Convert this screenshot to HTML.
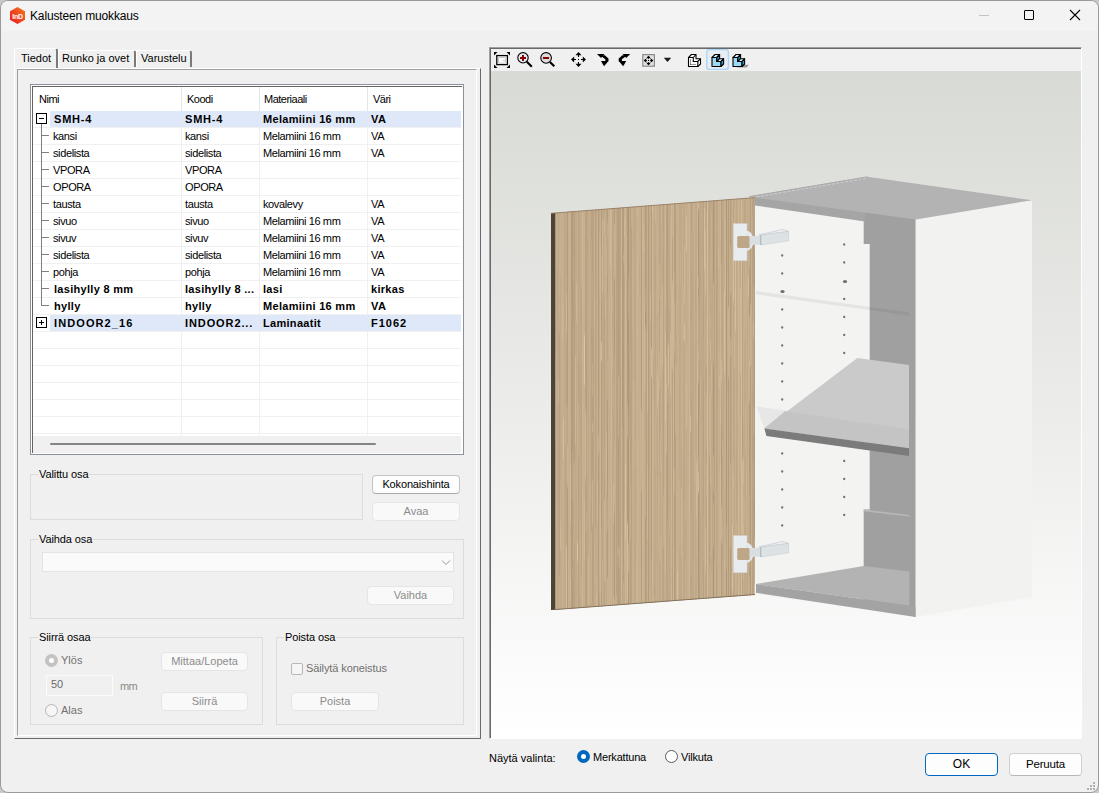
<!DOCTYPE html>
<html><head><meta charset="utf-8">
<style>
*{box-sizing:border-box;margin:0;padding:0}
html,body{width:1099px;height:793px;overflow:hidden;background:#c6c9c4}
body{font-family:"Liberation Sans",sans-serif;font-size:11px;color:#000;position:relative}
.a{position:absolute}
.t{position:absolute;white-space:pre;line-height:13px;height:13px}
.gb{position:absolute;border:1px solid #dcdcdc}
.gbt{position:absolute;white-space:pre;line-height:13px;background:#f0f0f0;padding:0 1px;letter-spacing:-0.1px}
.btn{position:absolute;border:1px solid #c4c4c4;border-bottom-color:#a8a8a8;border-radius:4px;background:#fdfdfd;text-align:center;line-height:17px;letter-spacing:-0.15px}
.btnd{position:absolute;border:1px solid #e5e5e5;border-radius:4px;background:#f9f9f9;text-align:center;line-height:17px;color:#8c8c8c}
.c{position:absolute;white-space:pre;line-height:13px;letter-spacing:-0.38px;color:#000}
.b{font-weight:bold;letter-spacing:0.3px}
</style></head><body>
<div class="a" style="left:0;top:0;width:1099px;height:793px;background:#f0f0f0;border:1px solid #9a9a9a;border-radius:8px"></div>
<div class="a" style="left:1px;top:1px;width:1097px;height:30px;background:#f3f3f3;border-radius:7px 7px 0 0"></div>
<!-- app icon -->
<svg class="a" style="left:8px;top:6px" width="19" height="19" viewBox="0 0 19 19">
 <defs><linearGradient id="ig" x1="0" y1="1" x2="1" y2="0"><stop offset="0" stop-color="#e8161c"/><stop offset="1" stop-color="#f47c22"/></linearGradient></defs>
 <polygon points="9.5,1 17,5.3 17,13.7 9.5,18 2,13.7 2,5.3" fill="url(#ig)"/>
 <text x="9.5" y="12.6" text-anchor="middle" font-family="Liberation Sans" font-weight="bold" font-size="7" fill="#fff" letter-spacing="-0.3">InD</text>
</svg>
<div class="t" style="left:30px;top:9px;font-size:12px;line-height:14px;height:14px;letter-spacing:-0.15px;color:#000">Kalusteen muokkaus</div>
<!-- window controls -->
<div class="a" style="left:979px;top:15px;width:10px;height:1px;background:#c4c4c4"></div>
<div class="a" style="left:1024px;top:10px;width:10px;height:10px;border:1px solid #000;border-radius:1px"></div>
<svg class="a" style="left:1069px;top:9px" width="12" height="12" viewBox="0 0 12 12"><path d="M1 1 L11 11 M11 1 L1 11" stroke="#000" stroke-width="1.1"/></svg>

<!-- tab panel -->
<div class="a" style="left:14px;top:68px;width:467px;height:671px;border-left:1px solid #fff;border-top:1px solid #fff;border-right:1px solid #696969;border-bottom:1px solid #696969"></div>
<div class="a" style="left:17px;top:69px;width:460px;height:667px;border-left:1px solid #a0a0a0;border-top:1px solid #a0a0a0;border-right:1px solid #fff;border-bottom:1px solid #fff"></div>
<!-- tabs -->
<div class="a" style="left:14px;top:48px;width:44px;height:20px;background:#f0f0f0;border-left:1px solid #fff;border-top:1px solid #fff;border-right:2px solid #7a7a7a;border-radius:2px 3px 0 0"></div>
<div class="a" style="left:58px;top:50px;width:78px;height:17px;background:#f0f0f0;border-top:1px solid #fff;border-right:2px solid #7a7a7a;border-left:1px solid #fff;border-radius:0 3px 0 0"></div>
<div class="a" style="left:136px;top:50px;width:56px;height:17px;background:#f0f0f0;border-top:1px solid #fff;border-right:2px solid #7a7a7a;border-left:1px solid #fff;border-radius:0 3px 0 0"></div>
<div class="t" style="left:21px;top:52px">Tiedot</div>
<div class="t" style="left:62px;top:52px">Runko ja ovet</div>
<div class="t" style="left:141px;top:52px">Varustelu</div>

<!-- listview -->
<div class="a" style="left:30px;top:84px;width:434px;height:371px;border:1px solid #8a919b"></div>
<div class="a" style="left:31px;top:85px;width:432px;height:369px;border:1px solid #fff"></div>
<div class="a" style="left:32px;top:86px;width:430px;height:367px;background:#fff;border-left:1px solid #646464;border-top:1px solid #646464"></div>
<div class="a" style="left:181px;top:87px;width:1px;height:24px;background:#e5e5e5"></div>
<div class="a" style="left:259px;top:87px;width:1px;height:24px;background:#e5e5e5"></div>
<div class="a" style="left:367px;top:87px;width:1px;height:24px;background:#e5e5e5"></div>
<div class="a" style="left:181px;top:111px;width:1px;height:325px;background:#f0f0f0"></div>
<div class="a" style="left:259px;top:111px;width:1px;height:325px;background:#f0f0f0"></div>
<div class="a" style="left:367px;top:111px;width:1px;height:325px;background:#f0f0f0"></div>
<div class="c" style="left:39px;top:93px;letter-spacing:-0.5px">Nimi</div>
<div class="c" style="left:187px;top:93px;letter-spacing:-0.5px">Koodi</div>
<div class="c" style="left:264px;top:93px;letter-spacing:-0.5px">Materiaali</div>
<div class="c" style="left:373px;top:93px;letter-spacing:-0.5px">Väri</div>
<div class="a" style="left:33px;top:127px;width:428px;height:1px;background:#f0f0f0"></div>
<div class="a" style="left:33px;top:144px;width:428px;height:1px;background:#f0f0f0"></div>
<div class="a" style="left:33px;top:161px;width:428px;height:1px;background:#f0f0f0"></div>
<div class="a" style="left:33px;top:178px;width:428px;height:1px;background:#f0f0f0"></div>
<div class="a" style="left:33px;top:195px;width:428px;height:1px;background:#f0f0f0"></div>
<div class="a" style="left:33px;top:212px;width:428px;height:1px;background:#f0f0f0"></div>
<div class="a" style="left:33px;top:229px;width:428px;height:1px;background:#f0f0f0"></div>
<div class="a" style="left:33px;top:246px;width:428px;height:1px;background:#f0f0f0"></div>
<div class="a" style="left:33px;top:263px;width:428px;height:1px;background:#f0f0f0"></div>
<div class="a" style="left:33px;top:280px;width:428px;height:1px;background:#f0f0f0"></div>
<div class="a" style="left:33px;top:297px;width:428px;height:1px;background:#f0f0f0"></div>
<div class="a" style="left:33px;top:314px;width:428px;height:1px;background:#f0f0f0"></div>
<div class="a" style="left:33px;top:331px;width:428px;height:1px;background:#f0f0f0"></div>
<div class="a" style="left:33px;top:348px;width:428px;height:1px;background:#f0f0f0"></div>
<div class="a" style="left:33px;top:365px;width:428px;height:1px;background:#f0f0f0"></div>
<div class="a" style="left:33px;top:382px;width:428px;height:1px;background:#f0f0f0"></div>
<div class="a" style="left:33px;top:399px;width:428px;height:1px;background:#f0f0f0"></div>
<div class="a" style="left:33px;top:416px;width:428px;height:1px;background:#f0f0f0"></div>
<div class="a" style="left:33px;top:433px;width:428px;height:1px;background:#f0f0f0"></div>
<div class="a" style="left:50px;top:111px;width:411px;height:16px;background:#dfe8f9"></div>
<div class="a" style="left:36px;top:113px;width:11px;height:11px;border:1px solid #000;background:#fff"></div>
<div class="a" style="left:39px;top:118px;width:5px;height:1px;background:#000"></div>
<div class="a" style="left:41px;top:124px;width:1px;height:4px;background:#808080"></div>
<div class="c b" style="left:54px;top:113px;letter-spacing:0.8px">SMH-4</div>
<div class="c b" style="left:185px;top:113px;letter-spacing:0.8px">SMH-4</div>
<div class="c b" style="left:263px;top:113px">Melamiini 16 mm</div>
<div class="c b" style="left:371px;top:113px;letter-spacing:0.5px">VA</div>
<div class="a" style="left:41px;top:128px;width:1px;height:17px;background:#808080"></div>
<div class="a" style="left:41px;top:135px;width:8px;height:1px;background:#808080"></div>
<div class="c" style="left:53px;top:130px">kansi</div>
<div class="c" style="left:185px;top:130px">kansi</div>
<div class="c" style="left:263px;top:130px">Melamiini 16 mm</div>
<div class="c" style="left:371px;top:130px">VA</div>
<div class="a" style="left:41px;top:145px;width:1px;height:17px;background:#808080"></div>
<div class="a" style="left:41px;top:152px;width:8px;height:1px;background:#808080"></div>
<div class="c" style="left:53px;top:147px">sidelista</div>
<div class="c" style="left:185px;top:147px">sidelista</div>
<div class="c" style="left:263px;top:147px">Melamiini 16 mm</div>
<div class="c" style="left:371px;top:147px">VA</div>
<div class="a" style="left:41px;top:162px;width:1px;height:17px;background:#808080"></div>
<div class="a" style="left:41px;top:169px;width:8px;height:1px;background:#808080"></div>
<div class="c" style="left:53px;top:164px">VPORA</div>
<div class="c" style="left:185px;top:164px">VPORA</div>
<div class="a" style="left:41px;top:179px;width:1px;height:17px;background:#808080"></div>
<div class="a" style="left:41px;top:186px;width:8px;height:1px;background:#808080"></div>
<div class="c" style="left:53px;top:181px">OPORA</div>
<div class="c" style="left:185px;top:181px">OPORA</div>
<div class="a" style="left:41px;top:196px;width:1px;height:17px;background:#808080"></div>
<div class="a" style="left:41px;top:203px;width:8px;height:1px;background:#808080"></div>
<div class="c" style="left:53px;top:198px">tausta</div>
<div class="c" style="left:185px;top:198px">tausta</div>
<div class="c" style="left:263px;top:198px">kovalevy</div>
<div class="c" style="left:371px;top:198px">VA</div>
<div class="a" style="left:41px;top:213px;width:1px;height:17px;background:#808080"></div>
<div class="a" style="left:41px;top:220px;width:8px;height:1px;background:#808080"></div>
<div class="c" style="left:53px;top:215px">sivuo</div>
<div class="c" style="left:185px;top:215px">sivuo</div>
<div class="c" style="left:263px;top:215px">Melamiini 16 mm</div>
<div class="c" style="left:371px;top:215px">VA</div>
<div class="a" style="left:41px;top:230px;width:1px;height:17px;background:#808080"></div>
<div class="a" style="left:41px;top:237px;width:8px;height:1px;background:#808080"></div>
<div class="c" style="left:53px;top:232px">sivuv</div>
<div class="c" style="left:185px;top:232px">sivuv</div>
<div class="c" style="left:263px;top:232px">Melamiini 16 mm</div>
<div class="c" style="left:371px;top:232px">VA</div>
<div class="a" style="left:41px;top:247px;width:1px;height:17px;background:#808080"></div>
<div class="a" style="left:41px;top:254px;width:8px;height:1px;background:#808080"></div>
<div class="c" style="left:53px;top:249px">sidelista</div>
<div class="c" style="left:185px;top:249px">sidelista</div>
<div class="c" style="left:263px;top:249px">Melamiini 16 mm</div>
<div class="c" style="left:371px;top:249px">VA</div>
<div class="a" style="left:41px;top:264px;width:1px;height:17px;background:#808080"></div>
<div class="a" style="left:41px;top:271px;width:8px;height:1px;background:#808080"></div>
<div class="c" style="left:53px;top:266px">pohja</div>
<div class="c" style="left:185px;top:266px">pohja</div>
<div class="c" style="left:263px;top:266px">Melamiini 16 mm</div>
<div class="c" style="left:371px;top:266px">VA</div>
<div class="a" style="left:41px;top:281px;width:1px;height:17px;background:#808080"></div>
<div class="a" style="left:41px;top:288px;width:8px;height:1px;background:#808080"></div>
<div class="c b" style="left:54px;top:283px">lasihylly 8 mm</div>
<div class="c b" style="left:185px;top:283px">lasihylly 8 ...</div>
<div class="c b" style="left:263px;top:283px">lasi</div>
<div class="c b" style="left:371px;top:283px">kirkas</div>
<div class="a" style="left:41px;top:298px;width:1px;height:8px;background:#808080"></div>
<div class="a" style="left:41px;top:305px;width:8px;height:1px;background:#808080"></div>
<div class="c b" style="left:54px;top:300px">hylly</div>
<div class="c b" style="left:185px;top:300px">hylly</div>
<div class="c b" style="left:263px;top:300px">Melamiini 16 mm</div>
<div class="c b" style="left:371px;top:300px;letter-spacing:0.5px">VA</div>
<div class="a" style="left:50px;top:315px;width:411px;height:16px;background:#dfe8f9"></div>
<div class="a" style="left:36px;top:317px;width:11px;height:11px;border:1px solid #000;background:#fff"></div>
<div class="a" style="left:39px;top:322px;width:5px;height:1px;background:#000"></div>
<div class="a" style="left:41px;top:320px;width:1px;height:5px;background:#000"></div>
<div class="c b" style="left:54px;top:317px;letter-spacing:1.1px">INDOOR2_16</div>
<div class="c b" style="left:185px;top:317px;letter-spacing:0.9px">INDOOR2...</div>
<div class="c b" style="left:263px;top:317px">Laminaatit</div>
<div class="c b" style="left:371px;top:317px;letter-spacing:1.0px">F1062</div>
<!-- scrollbar -->
<div class="a" style="left:33px;top:436px;width:428px;height:17px;background:#f0f0f0"></div>
<div class="a" style="left:50px;top:443px;width:326px;height:2px;background:#858585;border-radius:1px"></div>

<!-- Valittu osa -->
<div class="gb" style="left:30px;top:474px;width:333px;height:46px"></div>
<div class="gbt" style="left:38px;top:468px">Valittu osa</div>
<div class="btn" style="left:372px;top:475px;width:88px;height:19px">Kokonaishinta</div>
<div class="btnd" style="left:372px;top:502px;width:88px;height:19px">Avaa</div>

<!-- Vaihda osa -->
<div class="gb" style="left:30px;top:539px;width:434px;height:80px"></div>
<div class="gbt" style="left:38px;top:533px">Vaihda osa</div>
<div class="a" style="left:42px;top:552px;width:412px;height:20px;background:#fafafa;border:1px solid #e4e4e4"></div>
<svg class="a" style="left:441px;top:559px" width="10" height="7" viewBox="0 0 10 7"><path d="M1 1.5 L5 5.5 L9 1.5" stroke="#9a9a9a" fill="none" stroke-width="1"/></svg>
<div class="btnd" style="left:367px;top:586px;width:87px;height:19px">Vaihda</div>

<!-- Siirrä osaa -->
<div class="gb" style="left:30px;top:637px;width:233px;height:88px"></div>
<div class="gbt" style="left:38px;top:631px">Siirrä osaa</div>
<div class="a" style="left:45px;top:654px;width:13px;height:13px;border-radius:50%;background:#c3c3c3"></div>
<div class="a" style="left:49px;top:658px;width:5px;height:5px;border-radius:50%;background:#fff"></div>
<div class="t" style="left:61px;top:654px;color:#707070">Ylös</div>
<div class="a" style="left:46px;top:675px;width:67px;height:21px;border:1px solid #fbfbfb;background:#f0f0f0"></div>
<div class="t" style="left:51px;top:678px;color:#6a6a6a">50</div>
<div class="t" style="left:120px;top:680px;color:#8a8a8a;letter-spacing:-0.6px">mm</div>
<div class="a" style="left:45px;top:704px;width:13px;height:13px;border-radius:50%;background:#f6f6f6;border:1px solid #b5b5b5"></div>
<div class="t" style="left:61px;top:704px;color:#707070">Alas</div>
<div class="btnd" style="left:161px;top:652px;width:87px;height:19px">Mittaa/Lopeta</div>
<div class="btnd" style="left:161px;top:692px;width:87px;height:19px">Siirrä</div>

<!-- Poista osa -->
<div class="gb" style="left:276px;top:637px;width:188px;height:88px"></div>
<div class="gbt" style="left:284px;top:631px">Poista osa</div>
<div class="a" style="left:291px;top:663px;width:12px;height:12px;border-radius:2px;background:#f6f6f6;border:1px solid #b8b8b8"></div>
<div class="t" style="left:306px;top:662px;color:#707070;letter-spacing:-0.1px">Säilytä koneistus</div>
<div class="btnd" style="left:291px;top:692px;width:88px;height:19px">Poista</div>

<!-- 3D view frame -->
<div class="a" style="left:489px;top:47px;width:593px;height:692px;border-left:1px solid #a0a0a0;border-top:1px solid #a0a0a0;border-right:1px solid #fff;border-bottom:1px solid #fff"></div>
<div class="a" style="left:490px;top:48px;width:591px;height:690px;border-left:1px solid #696969;border-top:1px solid #696969;background:linear-gradient(#d9dbd6 0px,#d9dbd6 23px,#e6e7e3 200px,#f3f3f2 480px,#fbfbfb 690px)"></div>
<div class="a" style="left:491px;top:49px;width:590px;height:22px;background:#f0f0f0"></div>
<!-- toolbar icons -->
<svg class="a" style="left:491px;top:49px" width="270" height="22" viewBox="491 49 270 22">
 <!-- zoom extents -->
 <g fill="#000">
  <polygon points="494,52 497.5,52 494,55.5"/><polygon points="510,52 506.5,52 510,55.5"/>
  <polygon points="494,68 497.5,68 494,64.5"/><polygon points="510,68 506.5,68 510,64.5"/>
 </g>
 <rect x="496.8" y="55.6" width="10.6" height="9" fill="#fff" stroke="#000" stroke-width="1.3"/>
 <path d="M498.5 57.5 H505.7 V63 H498.5 Z M502.5 60.5 H505.7" stroke="#c4c4c4" stroke-width="0.9" fill="none"/>
 <!-- zoom in -->
 <circle cx="523" cy="57.8" r="5.2" fill="#e4eeee" stroke="#000" stroke-width="1.1"/>
 <path d="M526.8 61.8 L531.8 66.8" stroke="#000" stroke-width="2.1"/>
 <path d="M520 58.1 H526 M523 55 V61" stroke="#8b0000" stroke-width="2"/>
 <!-- zoom out -->
 <circle cx="546.1" cy="57.9" r="5.3" fill="#dcdcdc" stroke="#000" stroke-width="1.1"/>
 <path d="M549.9 61.9 L554.3 66.3" stroke="#000" stroke-width="2.1"/>
 <path d="M543 58 H549" stroke="#8b0000" stroke-width="2"/>
 <!-- pan -->
 <g fill="#000">
  <polygon points="578.5,52 581.5,55.2 575.5,55.2"/><polygon points="578.5,67 581.5,63.8 575.5,63.8"/>
  <polygon points="571,59.5 574.2,56.5 574.2,62.5"/><polygon points="586,59.5 582.8,56.5 582.8,62.5"/>
  <rect x="578" y="55" width="1" height="2"/><rect x="578" y="62" width="1" height="2"/>
  <rect x="574" y="59" width="2" height="1"/><rect x="581" y="59" width="2" height="1"/>
  <rect x="578" y="59" width="1" height="1"/>
 </g>
 <!-- rotate left -->
 <g fill="#000">
  <polygon points="597,54 604.5,54 601,58"/>
  <polygon points="602,55.3 604.8,55.3 608.5,58.5 608.5,61.2 605.3,61.2 605.3,59.3 602,56.8"/>
  <polygon points="601,61 608.5,61 604,66.2"/>
 </g>
 <!-- rotate right -->
 <g fill="#000" transform="translate(1227.2,0) scale(-1,1)">
  <polygon points="597,54 604.5,54 601,58"/>
  <polygon points="602,55.3 604.8,55.3 608.5,58.5 608.5,61.2 605.3,61.2 605.3,59.3 602,56.8"/>
  <polygon points="601,61 608.5,61 604,66.2"/>
 </g>
 <!-- snap -->
 <rect x="642.8" y="54.6" width="11.6" height="11.6" fill="#e0e0e0" stroke="#8a8a8a" stroke-width="1.2"/>
 <path d="M648.5 56.5 L652.5 60.5 L648.5 64.5 L644.5 60.5 Z" fill="none" stroke="#000" stroke-width="0.9" stroke-dasharray="1 0.8"/>
 <g fill="#000">
  <polygon points="648.5,55.8 650.3,57.6 648.5,59 646.7,57.6"/><polygon points="648.5,65.2 650.3,63.4 648.5,62 646.7,63.4"/>
  <polygon points="643.8,60.5 645.6,58.7 647,60.5 645.6,62.3"/><polygon points="653.2,60.5 651.4,58.7 650,60.5 651.4,62.3"/>
  <rect x="648" y="60" width="1" height="1"/>
 </g>
 <polygon points="663.8,57.8 671.2,57.8 667.5,62" fill="#1a1a1a"/>
 <!-- wire cube -->
 <g stroke="#000" stroke-width="1.1" fill="#fff" stroke-linejoin="round">
  <polygon points="688.5,57.5 691.5,54.5 696,54.5 696,58.7 700.5,58.7 700.5,64 697.8,66.5 688.5,66.5"/>
  <path d="M688.5 57.5 H693.3 V61.5 H697.8 V66.5 M693.3 57.5 L696 54.5 M697.8 61.5 L700.5 58.7" fill="none"/>
 </g>
 <path d="M690.5 64.5 H696 M690.5 59.5 V64.5" stroke="#000" stroke-width="0.8" stroke-dasharray="1 1" fill="none"/>
 <!-- selected shaded cube -->
 <rect x="706.8" y="49.6" width="21.6" height="19.8" rx="2.5" fill="#e9eef3" stroke="#a9d6fb" stroke-width="1.4"/>
 <g stroke="#000" stroke-width="1.1" stroke-linejoin="round">
  <polygon points="712,57.5 716.8,57.5 716.8,61.5 721,61.5 721,66.5 712,66.5" fill="#9fd8f2"/>
  <polygon points="712,57.5 715,54.5 719.6,54.5 716.8,57.5" fill="#dff3fb"/>
  <polygon points="716.8,57.5 719.6,54.5 719.6,58.7 716.8,61.5" fill="#2b9fd1"/>
  <polygon points="716.8,61.5 719.6,58.7 723.6,58.7 721,61.5" fill="#dff3fb"/>
  <polygon points="721,61.5 723.6,58.7 723.6,64 721,66.5" fill="#2b9fd1"/>
 </g>
 <!-- shaded cube w shadow -->
 <polygon points="737,67.5 746.5,67.5 749,64.8 740,64.8" fill="#9a9a9a"/>
 <g stroke="#000" stroke-width="1.1" stroke-linejoin="round">
  <polygon points="733,57.5 737.8,57.5 737.8,61.5 742,61.5 742,66.5 733,66.5" fill="#9fd8f2"/>
  <polygon points="733,57.5 736,54.5 740.6,54.5 737.8,57.5" fill="#dff3fb"/>
  <polygon points="737.8,57.5 740.6,54.5 740.6,58.7 737.8,61.5" fill="#2b9fd1"/>
  <polygon points="737.8,61.5 740.6,58.7 744.6,58.7 742,61.5" fill="#dff3fb"/>
  <polygon points="742,61.5 744.6,58.7 744.6,64 742,66.5" fill="#2b9fd1"/>
 </g>
</svg>
<!-- 3D scene -->
<svg class="a" style="left:491px;top:71px" width="590" height="667" viewBox="491 71 590 667">
 <defs>
  <linearGradient id="bg" x1="0" y1="71" x2="0" y2="738" gradientUnits="userSpaceOnUse"><stop offset="0" stop-color="#d8dad5"/><stop offset="1" stop-color="#ffffff"/></linearGradient>
  <filter id="wblur" x="0" y="0" width="1" height="1"><feGaussianBlur stdDeviation="0.6 1.5"/></filter>
  <clipPath id="doorclip"><polygon points="555,212.7 755,197.6 755,594.7 555,609.7"/></clipPath>
 </defs>
 <rect x="491" y="71" width="590" height="667" fill="url(#bg)"/>
 <!-- cabinet top -->
 <!-- right exterior side -->
 <polygon points="915.5,219.6 1032,200.2 1032,597 915.5,617" fill="#f2f2f1"/>
 <!-- interior back -->
 <polygon points="755,197 915.5,219.6 915.5,616 755,594" fill="#f3f3f2"/>
 <!-- interior right side column -->
 <polygon points="863.7,209 915.5,216.6 915.5,617 863.7,600 863.7,509.6 869.7,509.6 869.7,244 863.7,244" fill="#a0a0a0"/>
 <!-- under top band -->
 <polygon points="755,195 865,210.2 865,221.6 755,205.5" fill="#a5a5a5"/>
 <!-- top surface -->
 <polygon points="748.5,196.6 867.3,176.7 1032,200.2 915.5,219.6" fill="#b3b3b3"/>
 <path d="M749 196.7 L867.3 176.9" stroke="#a9a9a9" stroke-width="1"/>
 <path d="M752 197.5 L866 178.4" stroke="#e2e2e2" stroke-width="0.7" stroke-dasharray="3 1.5" opacity="0.8"/>
 <!-- lower step highlight -->
 <polygon points="863.7,509.6 909.3,515 909.3,516.5 863.7,511.2" fill="#b8b8b8"/>
 <!-- glass shelf line -->
 <polygon points="756,291 869.7,307 869.7,310 756,294.5" fill="#e4e4e4"/>
 <polygon points="869.7,307 909.3,312.6 909.3,315.8 869.7,310" fill="#979797"/>
 <!-- faint glass shelf reflection -->
 <polygon points="756.6,406.4 790,411 764.4,428.5" fill="#e7e7e7"/>
 <!-- shelf -->
 <polygon points="857.4,358 909,364.9 909,448.2 764.4,428.5" fill="#cacaca"/>
 <polygon points="785,411.3 909,429.3 909,448.2 764.4,428.5" fill="#c4c4c4"/>
 <polygon points="764.4,428.5 909,448.2 909,456 766.4,435.9" fill="#7b7b7b"/>
 <!-- bottom panel -->
 <polygon points="863.7,566.1 909.3,571.6 909.3,605.7 756,584.1" fill="#b3b3b3"/>
 <polygon points="756,584.1 909.3,605.7 915.5,606.5 915.5,617 756,592.8" fill="#a3a3a3"/>
 <!-- door -->
 <polygon points="551,213.3 755,197.6 755,594.7 551,610.1" fill="#bea786"/>
 <g clip-path="url(#doorclip)"><g filter="url(#wblur)">
<rect x="551" y="190" width="206" height="430" fill="#bea786"/>
<path d="M653.5 356v47M685.5 522v40M654.5 582v71M665.5 307v61M645.5 312v51" stroke="rgb(155,133,106)" stroke-width="1" fill="none" opacity="0.7"/>
<path d="M628.5 195v420M698.5 195v420M713.5 195v420M726.5 195v420M646.5 440v82M730.5 591v29M575.5 307v11M710.5 309v19M632.5 332v89M644.5 308v25M600.5 209v36M584.5 360v25M607.5 230v16M627.5 278v68M655.5 256v31M717.5 276v89M682.5 543v51M686.5 350v75M644.5 201v40M605.5 211v24M612.5 303v25M632.5 372v77M555.5 517v56M722.5 598v25M675.5 228v74M719.5 314v35M697.5 532v57M633.5 209v39" stroke="rgb(164,142,114)" stroke-width="1" fill="none" opacity="0.7"/>
<path d="M567.5 195v420M571.5 195v420M572.5 195v420M598.5 195v420M601.5 195v420M607.5 195v420M614.5 195v420M618.5 195v420M622.5 195v420M623.5 195v420M627.5 195v420M641.5 195v420M645.5 195v420M648.5 195v420M651.5 195v420M667.5 195v420M674.5 195v420M721.5 195v420M728.5 195v420M730.5 195v420M749.5 195v420M750.5 195v420M754.5 195v420M684.5 416v85M666.5 332v51M610.5 519v50M656.5 410v65M598.5 595v41M626.5 195v39M717.5 254v51M746.5 566v75M743.5 426v67M612.5 216v84M573.5 295v29M749.5 299v17M655.5 281v88M592.5 289v42M676.5 333v34M753.5 238v47M595.5 197v82M587.5 201v53M572.5 456v38M588.5 525v17M693.5 474v88M576.5 281v17M561.5 551v75M681.5 316v16M731.5 293v46M588.5 379v71M725.5 480v61M603.5 322v47M594.5 486v52M566.5 391v20M629.5 371v87M727.5 349v47M736.5 452v59M751.5 395v42M700.5 230v60M566.5 349v55M683.5 459v42M621.5 449v88M721.5 447v33M669.5 310v78M705.5 586v27M734.5 567v51M591.5 230v12M722.5 215v72M582.5 383v16M583.5 561v30M564.5 247v48M565.5 412v87M664.5 548v58M622.5 343v63M719.5 412v69M737.5 248v79M654.5 381v23M632.5 345v57M629.5 363v54M679.5 613v36M639.5 261v32M733.5 440v87M586.5 343v67M563.5 212v21M669.5 496v29M607.5 424v87M736.5 592v49M579.5 352v68M744.5 201v36M682.5 342v53M636.5 220v36M743.5 250v9M727.5 220v54M733.5 559v12M754.5 487v45M733.5 380v48M578.5 288v14M566.5 481v66M613.5 284v77M742.5 416v32M561.5 446v87M733.5 201v85M571.5 438v27M750.5 614v73M573.5 496v37M743.5 542v41M555.5 269v85M665.5 557v50M690.5 576v49M684.5 533v63M689.5 511v31M637.5 534v17M734.5 573v69M561.5 522v10M671.5 363v50M569.5 396v19M695.5 278v30" stroke="rgb(173,151,122)" stroke-width="1" fill="none" opacity="0.7"/>
<path d="M559.5 195v420M573.5 195v420M574.5 195v420M578.5 195v420M581.5 195v420M585.5 195v420M586.5 195v420M591.5 195v420M592.5 195v420M593.5 195v420M595.5 195v420M604.5 195v420M616.5 195v420M617.5 195v420M619.5 195v420M620.5 195v420M630.5 195v420M631.5 195v420M646.5 195v420M659.5 195v420M663.5 195v420M666.5 195v420M672.5 195v420M675.5 195v420M691.5 195v420M699.5 195v420M703.5 195v420M706.5 195v420M709.5 195v420M714.5 195v420M716.5 195v420M742.5 195v420M752.5 195v420M753.5 195v420M650.5 270v73M720.5 607v62M576.5 430v28M737.5 381v58M722.5 253v18M618.5 498v10M654.5 546v40M656.5 484v89M660.5 510v62M722.5 430v59M652.5 196v73M613.5 412v46M735.5 317v39M633.5 614v56M580.5 393v36M599.5 576v90M704.5 368v42M684.5 516v46M689.5 371v29M579.5 600v25M743.5 205v27M650.5 597v86M668.5 352v69M606.5 522v86M573.5 264v65M651.5 217v84M712.5 288v41M578.5 447v53M639.5 440v43M710.5 387v23M734.5 310v75M591.5 263v85M671.5 566v17M753.5 437v38M616.5 321v12M724.5 494v30M602.5 576v60M574.5 513v25M637.5 378v71M576.5 462v15M712.5 488v73M635.5 361v81M620.5 260v77M593.5 322v66M561.5 363v73M681.5 390v20M669.5 510v43M605.5 373v45M690.5 586v23M638.5 372v65M660.5 287v74M718.5 392v32M608.5 353v29M583.5 544v60M557.5 200v86M575.5 255v27M588.5 569v58M703.5 379v80M723.5 392v54M655.5 309v50M749.5 470v73M564.5 321v9M592.5 582v58M688.5 387v71M592.5 216v71M685.5 538v15M613.5 220v88M648.5 282v29M695.5 347v54M674.5 340v51M668.5 305v72M646.5 593v83M746.5 476v40M740.5 549v60M588.5 401v34M750.5 202v74M592.5 378v83M699.5 218v74M608.5 273v76M558.5 447v55M655.5 312v18M603.5 336v44M741.5 300v43M661.5 224v44M731.5 567v11M690.5 310v52M739.5 456v29M595.5 493v46M666.5 401v31M729.5 450v39M658.5 412v64M747.5 399v44M719.5 611v81M688.5 278v49M669.5 368v18M698.5 344v22M608.5 237v82M644.5 357v12M675.5 598v49M616.5 563v48M713.5 297v22M643.5 546v74M734.5 442v38M709.5 357v62M724.5 343v60M564.5 298v17M693.5 360v69M580.5 515v12M707.5 266v63M708.5 544v17M577.5 331v46M680.5 588v62M591.5 542v34M748.5 233v11M624.5 277v15M669.5 595v47M623.5 567v10M727.5 301v16M753.5 498v16M738.5 561v22M704.5 338v71M583.5 563v52M729.5 452v14M609.5 405v29M709.5 461v60M634.5 279v57M597.5 332v69M690.5 337v13M637.5 214v59M717.5 373v52M672.5 428v62M703.5 303v66M562.5 407v27M702.5 405v17M634.5 329v42M749.5 358v40M740.5 302v58M684.5 426v34M673.5 613v27M660.5 452v64M645.5 232v40M628.5 414v27M619.5 297v76M636.5 467v74M660.5 404v82M706.5 206v57M651.5 218v65M606.5 556v54M738.5 429v12M617.5 419v42M667.5 531v49M566.5 487v11M722.5 318v27M667.5 260v83M574.5 427v73M561.5 411v16M684.5 250v55M584.5 234v80M697.5 221v28M674.5 608v11M717.5 339v74M720.5 589v82M703.5 545v74M720.5 524v79M722.5 292v24M572.5 469v77M675.5 387v36M597.5 344v77M572.5 309v65M679.5 382v87M704.5 210v35M663.5 372v88M582.5 412v80M625.5 590v30M616.5 466v87M709.5 361v85M592.5 561v52M725.5 475v55M720.5 241v26M621.5 434v26M655.5 373v13M749.5 509v86M575.5 240v21M650.5 540v19" stroke="rgb(182,160,130)" stroke-width="1" fill="none" opacity="0.7"/>
<path d="M555.5 195v420M557.5 195v420M558.5 195v420M560.5 195v420M564.5 195v420M565.5 195v420M566.5 195v420M575.5 195v420M576.5 195v420M579.5 195v420M580.5 195v420M587.5 195v420M588.5 195v420M590.5 195v420M596.5 195v420M599.5 195v420M602.5 195v420M603.5 195v420M606.5 195v420M612.5 195v420M613.5 195v420M624.5 195v420M629.5 195v420M634.5 195v420M635.5 195v420M649.5 195v420M654.5 195v420M655.5 195v420M657.5 195v420M660.5 195v420M662.5 195v420M668.5 195v420M669.5 195v420M670.5 195v420M679.5 195v420M680.5 195v420M681.5 195v420M683.5 195v420M684.5 195v420M686.5 195v420M690.5 195v420M692.5 195v420M693.5 195v420M695.5 195v420M696.5 195v420M700.5 195v420M701.5 195v420M702.5 195v420M705.5 195v420M708.5 195v420M710.5 195v420M711.5 195v420M712.5 195v420M717.5 195v420M722.5 195v420M723.5 195v420M731.5 195v420M733.5 195v420M734.5 195v420M736.5 195v420M737.5 195v420M740.5 195v420M744.5 195v420M745.5 195v420M747.5 195v420M613.5 296v56M589.5 394v67M650.5 590v65M558.5 334v59M738.5 435v65M692.5 374v14M622.5 427v84M587.5 216v25M590.5 341v9M701.5 426v24M723.5 561v63M603.5 601v33M595.5 407v8M607.5 233v41M615.5 293v56M715.5 542v56M733.5 482v65M581.5 346v17M704.5 406v52M702.5 301v14M608.5 501v25M691.5 517v59M584.5 302v69M689.5 486v63M733.5 279v88M656.5 567v66M721.5 315v85M564.5 503v45M615.5 429v40M593.5 233v36M748.5 248v49M680.5 557v26M734.5 394v56M665.5 212v72M605.5 462v65M659.5 440v40M599.5 447v9M616.5 204v49M617.5 539v27M734.5 566v68M630.5 352v35M610.5 343v86M649.5 352v83M717.5 517v11M739.5 303v69M607.5 496v34M654.5 493v45M578.5 275v88M576.5 445v59M690.5 273v34M634.5 426v60M576.5 401v74M632.5 575v59M724.5 543v23M706.5 211v77M652.5 294v71M580.5 376v16M643.5 409v11M701.5 522v50M726.5 613v68M738.5 264v73M741.5 223v37M583.5 406v83M753.5 460v40M707.5 381v22M718.5 302v60M751.5 441v62M561.5 258v59M625.5 240v37M649.5 252v85M667.5 342v61M643.5 589v68M743.5 255v24M676.5 408v61M704.5 390v69M645.5 290v17M622.5 510v65M712.5 415v30M683.5 600v26M607.5 294v69M694.5 555v44M699.5 435v33M560.5 240v84M725.5 455v11M707.5 606v8M743.5 314v26M572.5 568v10M705.5 466v37M723.5 260v21M600.5 498v80M562.5 423v21M707.5 246v89M609.5 363v9M721.5 344v78M555.5 498v31M601.5 254v48M662.5 557v9M691.5 586v35M751.5 409v48M698.5 458v36M597.5 378v43M680.5 487v57M575.5 271v11M712.5 431v29M717.5 437v83M575.5 466v25M555.5 482v18M748.5 232v79M698.5 297v68M696.5 388v84M639.5 441v75M716.5 483v83M665.5 530v24M592.5 276v23M629.5 240v60M748.5 612v26M705.5 590v64M588.5 295v20M698.5 277v11M719.5 396v60M583.5 288v13M612.5 571v13M572.5 451v49M671.5 280v13M622.5 549v79M737.5 395v80M591.5 238v29M718.5 208v16M673.5 557v20M660.5 361v85M742.5 461v74M745.5 316v33M608.5 391v52M584.5 247v19M664.5 452v46M752.5 319v71M729.5 380v13M703.5 514v47M669.5 371v72M699.5 318v40M615.5 256v55M739.5 331v77M589.5 329v88M592.5 272v60M675.5 343v89M637.5 526v33M659.5 541v58M716.5 221v9M725.5 327v82M744.5 297v40M577.5 419v40M579.5 542v37M603.5 275v31M687.5 338v21M696.5 234v30M600.5 385v19M604.5 450v25M657.5 423v30M632.5 231v23M625.5 368v62M591.5 243v83M682.5 270v77M713.5 283v83M741.5 485v69M637.5 280v33M582.5 492v63M594.5 490v45M576.5 400v44M722.5 319v23M654.5 261v33M692.5 264v44M699.5 196v77M726.5 526v43M614.5 381v54M749.5 599v59M690.5 451v32M652.5 428v27M669.5 242v50M636.5 226v44M727.5 426v67M709.5 252v72M597.5 321v66M744.5 498v12M664.5 532v17M740.5 479v29M585.5 406v80M591.5 539v64M620.5 286v81M588.5 347v46M621.5 204v46M752.5 214v20M668.5 417v86M667.5 519v80M691.5 323v71M645.5 382v55M615.5 266v13M671.5 610v37M559.5 264v30M727.5 467v24M557.5 584v54M677.5 499v35M573.5 261v20M709.5 347v89M567.5 406v54M591.5 590v38M682.5 340v74M605.5 305v44M587.5 482v57M591.5 558v90M577.5 604v9M691.5 233v36M738.5 496v80M601.5 528v65M558.5 611v34M748.5 566v68M656.5 366v54M692.5 469v53M754.5 197v58M711.5 577v12M680.5 507v39M619.5 459v53M699.5 414v47M706.5 258v64M669.5 219v23M573.5 462v78M563.5 381v38M749.5 494v39M688.5 333v14M722.5 369v47M689.5 506v41M563.5 481v53M718.5 238v15M609.5 305v34M565.5 323v79M715.5 555v29M662.5 352v46M652.5 440v38M609.5 529v32M641.5 463v12M674.5 271v84M584.5 581v25M711.5 594v42M686.5 303v82M651.5 558v57M663.5 232v19M628.5 278v41M669.5 484v27M658.5 318v81M636.5 232v28M701.5 480v20M710.5 576v70M587.5 601v63M748.5 526v29M653.5 576v64M609.5 597v38M721.5 263v51M704.5 464v31M587.5 437v76M587.5 505v22M614.5 356v87M619.5 379v17M595.5 577v45M722.5 463v72M603.5 224v53M703.5 339v40M722.5 258v63M568.5 448v76M749.5 532v37M722.5 332v8M747.5 333v89M557.5 558v67M590.5 344v82M576.5 432v50M744.5 607v44" stroke="rgb(191,169,138)" stroke-width="1" fill="none" opacity="0.7"/>
<path d="M556.5 195v420M561.5 195v420M562.5 195v420M563.5 195v420M568.5 195v420M569.5 195v420M570.5 195v420M577.5 195v420M583.5 195v420M584.5 195v420M589.5 195v420M594.5 195v420M597.5 195v420M605.5 195v420M608.5 195v420M609.5 195v420M610.5 195v420M615.5 195v420M626.5 195v420M632.5 195v420M633.5 195v420M636.5 195v420M638.5 195v420M639.5 195v420M640.5 195v420M643.5 195v420M644.5 195v420M647.5 195v420M650.5 195v420M653.5 195v420M656.5 195v420M658.5 195v420M661.5 195v420M664.5 195v420M676.5 195v420M677.5 195v420M678.5 195v420M682.5 195v420M685.5 195v420M687.5 195v420M688.5 195v420M694.5 195v420M704.5 195v420M715.5 195v420M718.5 195v420M719.5 195v420M724.5 195v420M725.5 195v420M727.5 195v420M729.5 195v420M732.5 195v420M735.5 195v420M739.5 195v420M743.5 195v420M746.5 195v420M748.5 195v420M751.5 195v420M736.5 524v70M744.5 499v22M735.5 534v20M581.5 201v88M720.5 284v29M581.5 577v37M655.5 418v51M711.5 572v21M652.5 611v76M658.5 337v24M657.5 222v89M718.5 304v20M568.5 557v45M660.5 295v17M706.5 317v49M649.5 588v17M606.5 264v15M613.5 388v21M733.5 458v68M615.5 433v9M742.5 202v46M744.5 283v56M745.5 251v75M653.5 384v33M618.5 548v8M610.5 215v16M657.5 275v39M596.5 576v49M659.5 353v36M634.5 382v86M555.5 359v84M746.5 466v80M639.5 482v24M749.5 255v12M754.5 586v35M734.5 208v42M640.5 402v84M591.5 532v69M627.5 524v14M679.5 478v69M724.5 474v18M753.5 408v27M718.5 548v83M671.5 586v39M583.5 281v29M674.5 469v25M595.5 529v53M616.5 595v34M636.5 566v46M658.5 356v18M565.5 407v39M656.5 329v11M661.5 462v38M641.5 410v81M685.5 204v8M574.5 463v79M743.5 508v35M560.5 212v65M627.5 538v75M559.5 303v31M698.5 350v34M573.5 539v22M653.5 401v73M624.5 544v29M735.5 405v39M670.5 248v46M659.5 263v35M713.5 503v44M675.5 365v69M645.5 326v60M711.5 495v60M711.5 590v51M663.5 496v50M599.5 506v85M580.5 521v74M681.5 392v54M686.5 347v84M711.5 476v81M665.5 542v32M614.5 441v60M711.5 212v67M618.5 376v61M741.5 218v55M583.5 530v38M630.5 483v57M734.5 534v31M732.5 213v76M709.5 293v56M584.5 214v90M559.5 209v89M640.5 593v71M696.5 467v89M614.5 443v70M606.5 247v47M637.5 260v30M688.5 284v47M623.5 254v8M598.5 435v19M677.5 492v75M629.5 445v8M658.5 382v50M718.5 558v34M745.5 403v50M661.5 421v10M659.5 490v16M669.5 509v21M751.5 533v83M612.5 297v15M599.5 410v39M672.5 200v37M632.5 380v68M746.5 505v21M666.5 356v34M557.5 215v54M693.5 197v33M586.5 514v17M604.5 213v84M749.5 317v54M725.5 330v62M627.5 405v32M568.5 326v27M611.5 364v83M709.5 566v79M560.5 480v62M594.5 322v39M624.5 195v76M710.5 315v12M720.5 313v15M640.5 410v84M682.5 423v28M658.5 382v85M625.5 321v81M621.5 537v53M612.5 346v25M569.5 200v89M682.5 550v84M628.5 544v28M563.5 433v60M642.5 475v76M749.5 577v79M629.5 439v42M660.5 432v41M732.5 425v17M640.5 568v59M722.5 439v17M559.5 241v74M633.5 395v21M714.5 562v85M700.5 427v85M623.5 582v56M709.5 375v79M734.5 311v29M730.5 338v19M730.5 464v84M674.5 303v46M707.5 521v33M600.5 513v15M702.5 582v21M568.5 466v41M706.5 465v32M753.5 286v55M645.5 438v80M737.5 258v68M730.5 246v48M590.5 483v20M738.5 342v26M607.5 224v12M664.5 485v89M594.5 244v77M749.5 195v69M740.5 417v51M660.5 537v28M605.5 238v37M631.5 202v24M713.5 455v38M625.5 357v55M754.5 538v79M643.5 564v13M619.5 548v20M683.5 289v53M700.5 376v64M624.5 510v49M644.5 299v69M687.5 264v22M743.5 334v77M578.5 403v52M587.5 420v50M602.5 561v49M705.5 260v30M647.5 582v9M594.5 287v35M682.5 279v59M614.5 599v52M697.5 360v72M722.5 528v8M652.5 202v17M643.5 473v74M563.5 541v23M654.5 596v50M605.5 343v16M681.5 353v51M582.5 595v81M670.5 215v40M747.5 274v33M607.5 360v40M706.5 392v54M606.5 519v11M659.5 476v82M568.5 369v49M609.5 550v73M719.5 468v80M695.5 452v31M599.5 234v63M680.5 253v31M665.5 534v11M713.5 283v77M696.5 386v36M592.5 364v31M738.5 498v67M681.5 306v37M559.5 577v66" stroke="rgb(200,178,146)" stroke-width="1" fill="none" opacity="0.7"/>
<path d="M582.5 195v420M600.5 195v420M611.5 195v420M621.5 195v420M625.5 195v420M637.5 195v420M642.5 195v420M652.5 195v420M665.5 195v420M671.5 195v420M673.5 195v420M689.5 195v420M697.5 195v420M720.5 195v420M738.5 195v420M755.5 195v420M749.5 361v41M558.5 380v23M643.5 225v28M742.5 461v74M696.5 462v41M624.5 218v19M644.5 306v87M584.5 499v61M705.5 547v18M750.5 304v62M724.5 562v10M585.5 414v64M650.5 294v28M613.5 595v49M719.5 377v12M734.5 337v30M610.5 197v70M604.5 222v11M594.5 299v28M670.5 332v40M604.5 499v82M686.5 383v44M672.5 281v59M711.5 364v30M602.5 220v72M570.5 578v20M681.5 488v68M662.5 286v79M575.5 356v89M576.5 282v40M597.5 482v40M725.5 219v76M710.5 341v21M570.5 463v60M588.5 557v48M743.5 525v54M705.5 527v46M567.5 446v41M606.5 432v61M562.5 302v37M740.5 288v85M697.5 278v14M697.5 355v70M655.5 204v19M684.5 246v57M720.5 410v17M596.5 594v49M720.5 459v45M705.5 230v67M592.5 423v9M605.5 298v19M721.5 507v35M657.5 372v36M592.5 480v45M721.5 360v22M566.5 294v39M613.5 484v39M670.5 358v37M560.5 522v28M647.5 331v82M743.5 458v26M728.5 307v70M607.5 577v47M647.5 464v76M718.5 247v21M614.5 224v54M733.5 475v14M666.5 383v70M696.5 485v31M660.5 316v60M672.5 290v79M658.5 379v24M753.5 323v12M710.5 393v89" stroke="rgb(209,187,154)" stroke-width="1" fill="none" opacity="0.7"/>
<path d="M707.5 195v420M741.5 195v420M698.5 472v20M652.5 205v8M684.5 323v18M704.5 208v62M665.5 332v88M668.5 345v42M748.5 278v18M563.5 418v41M732.5 524v67M733.5 223v79M592.5 605v68M625.5 463v75M698.5 200v9M735.5 243v88M754.5 584v16M690.5 416v16M651.5 349v28M601.5 342v19M627.5 523v79M724.5 290v84M686.5 216v35M677.5 570v40M566.5 546v64" stroke="rgb(218,196,162)" stroke-width="1" fill="none" opacity="0.7"/>
<path d="M584.5 335v50M577.5 543v18" stroke="rgb(227,205,170)" stroke-width="1" fill="none" opacity="0.7"/>
 </g></g>
 <polygon points="551,213.3 555.2,213 555.2,609.8 551,610.1" fill="#4f4337"/>
 <path d="M554.5 609.6 L755 594.5" stroke="#7d6a57" stroke-width="0.9"/>
 <path d="M551 213.3 L755 197.6" stroke="#8f7a62" stroke-width="0.8"/>
 <!-- dots -->
 <g fill="#6e6e6e"><circle cx="782.2" cy="255.5" r="1.15"/><circle cx="782.2" cy="273.5" r="1.15"/><circle cx="782.2" cy="309.5" r="1.15"/><circle cx="782.2" cy="327.5" r="1.15"/><circle cx="782.2" cy="345.5" r="1.15"/><circle cx="782.2" cy="363.5" r="1.15"/><circle cx="782.2" cy="381.5" r="1.15"/><circle cx="782.2" cy="399.5" r="1.15"/><circle cx="782.2" cy="453.5" r="1.15"/><circle cx="782.2" cy="471.5" r="1.15"/><circle cx="782.2" cy="489.5" r="1.15"/><circle cx="782.2" cy="507.5" r="1.15"/><circle cx="782.2" cy="525.5" r="1.15"/><circle cx="844.2" cy="244.5" r="1.15"/><circle cx="844.2" cy="262.5" r="1.15"/><circle cx="844.2" cy="299" r="1.15"/><circle cx="844.2" cy="317" r="1.15"/><circle cx="844.2" cy="335" r="1.15"/><circle cx="844.2" cy="353" r="1.15"/><circle cx="844.2" cy="461" r="1.15"/><circle cx="844.2" cy="479" r="1.15"/><circle cx="844.2" cy="497" r="1.15"/><circle cx="844.2" cy="515" r="1.15"/><ellipse cx="782.5" cy="291.5" rx="2.1" ry="1.5"/><ellipse cx="845" cy="281.5" rx="2.1" ry="1.5"/></g>
 <!-- hinges -->
 <g id="hinge">
  <rect x="733.4" y="223.7" width="13.6" height="36.9" fill="#e8ecef" stroke="#d2d7da" stroke-width="0.5"/>
  <path d="M747 230.7 A6.5 10 0 0 1 747 250.8 Z" fill="#e4e8eb"/>
  <rect x="737.2" y="235.9" width="12.5" height="12.1" rx="1.5" fill="#bea786"/>
  <polygon points="749.7,236.3 760.5,235.6 760.5,244.8 749.7,245" fill="#d9dee1"/>
  <polygon points="759,234.8 783,229.4 788.7,231.4 760.5,235.2" fill="#eef1f3" stroke="#b3b9bd" stroke-width="0.5"/>
  <polygon points="760.5,235.2 788.7,231.4 788.7,240.8 760.5,245" fill="#dde2e5" stroke="#c3c8cc" stroke-width="0.5"/>
  <path d="M760.8 235.4 V245" stroke="#9aa1a5" stroke-width="0.7"/>
 </g>
 <use href="#hinge" x="0" y="312"/>
</svg>
<!-- bottom -->
<div class="t" style="left:489px;top:752px;font-size:11px">Näytä valinta:</div>
<div class="a" style="left:577px;top:750px;width:13px;height:13px;border-radius:50%;background:#0067c0"></div>
<div class="a" style="left:581px;top:754px;width:5px;height:5px;border-radius:50%;background:#fff"></div>
<div class="t" style="left:593px;top:751px;letter-spacing:-0.2px">Merkattuna</div>
<div class="a" style="left:665px;top:750px;width:13px;height:13px;border-radius:50%;background:#fff;border:1px solid #5a5a5a"></div>
<div class="t" style="left:681px;top:751px;letter-spacing:-0.2px">Vilkuta</div>
<div class="a" style="left:925px;top:753px;width:73px;height:23px;border:1.5px solid #0067c0;border-radius:4px;background:#fdfdfd;text-align:center;line-height:20px;font-size:12px">OK</div>
<div class="a" style="left:1009px;top:753px;width:73px;height:23px;border:1px solid #d0d0d0;border-bottom-color:#b8b8b8;border-radius:4px;background:#fdfdfd;text-align:center;line-height:21px;font-size:11.5px;letter-spacing:-0.2px">Peruuta</div>
<svg class="a" style="left:1087px;top:782px" width="10" height="10"><g fill="#b0b0b0"><rect x="6" y="0" width="2" height="2"/><rect x="3" y="3" width="2" height="2"/><rect x="6" y="3" width="2" height="2"/><rect x="0" y="6" width="2" height="2"/><rect x="3" y="6" width="2" height="2"/><rect x="6" y="6" width="2" height="2"/></g></svg>
</body></html>
